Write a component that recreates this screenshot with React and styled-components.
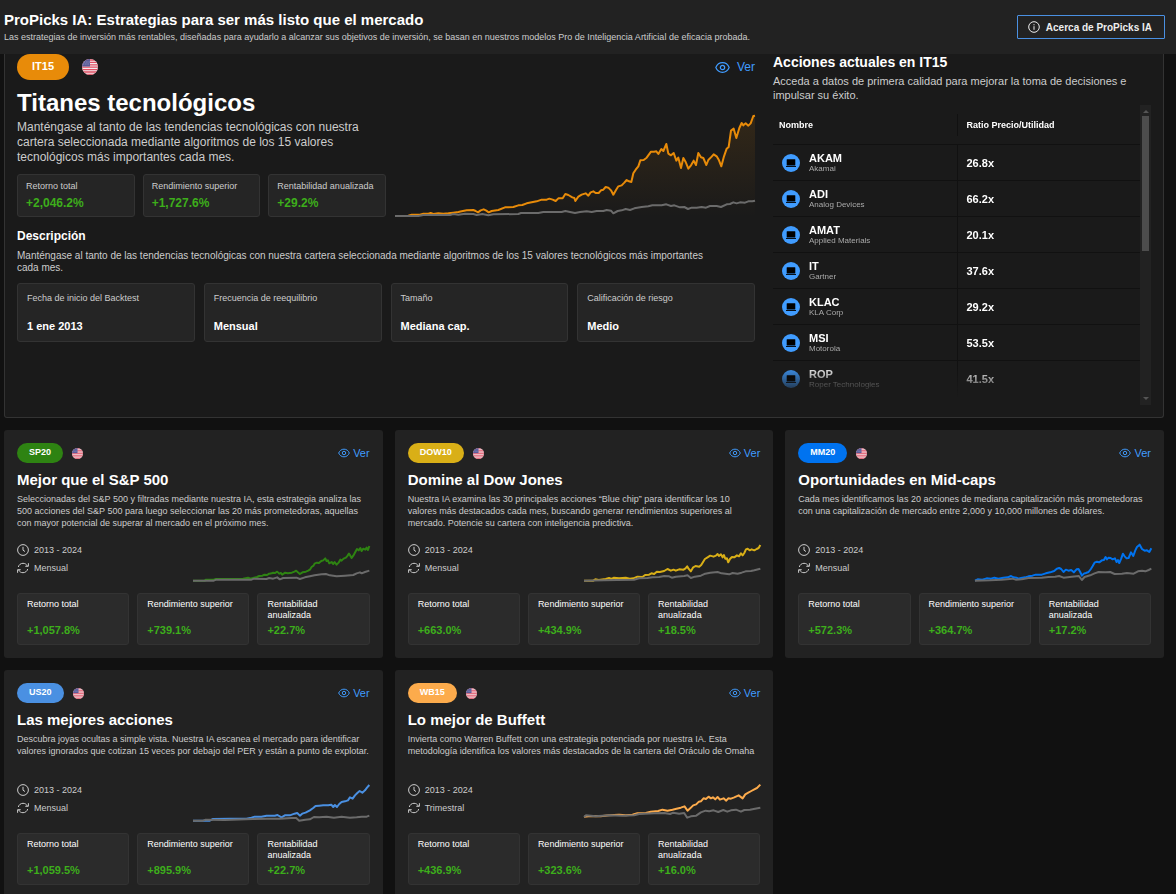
import React from "react";
import styled, { createGlobalStyle } from "styled-components";

const GlobalStyle = createGlobalStyle`
  * {
    box-sizing: border-box;
  }
  body {
    margin: 0;
    background: #111111;
    color: #ffffff;
    font-family: "Liberation Sans", Arial, sans-serif;
    font-size: 9px;
  }
  h1, h2, h3, p, dl, dt, dd {
    margin: 0;
  }
`;

const heroStats = [
  { label: "Retorno total", value: "+2,046.2%" },
  { label: "Rendimiento superior", value: "+1,727.6%" },
  { label: "Rentabilidad anualizada", value: "+29.2%" },
];

const heroFacts = [
  { label: "Fecha de inicio del Backtest", value: "1 ene 2013" },
  { label: "Frecuencia de reequilibrio", value: "Mensual" },
  { label: "Tamaño", value: "Mediana cap." },
  { label: "Calificación de riesgo", value: "Medio" },
];

const stocks = [
  { ticker: "AKAM", name: "Akamai", ratio: "26.8x" },
  { ticker: "ADI", name: "Analog Devices", ratio: "66.2x" },
  { ticker: "AMAT", name: "Applied Materials", ratio: "20.1x" },
  { ticker: "IT", name: "Gartner", ratio: "37.6x" },
  { ticker: "KLAC", name: "KLA Corp", ratio: "29.2x" },
  { ticker: "MSI", name: "Motorola", ratio: "53.5x" },
  { ticker: "ROP", name: "Roper Technologies", ratio: "41.5x" },
];

const heroLine =
  "0,306 40,305 50,302 75,302 85,299 100,299 107,297 115,300 130,298 145,299 160,298 175,296 190,294 200,292 215,289 235,288 242,291 249,295 257,289 266,286 274,290 281,295 290,291 310,288 330,280 355,279 370,274 382,273 395,268 425,262 440,257 455,257 463,254 473,257 482,261 490,253 503,253 511,240 520,243 532,250 538,252 541,261 550,248 560,242 572,238 580,245 587,235 595,232 602,237 611,237 618,229 625,227 632,219 640,221 648,229 655,242 663,228 670,217 680,214 688,206 695,198 702,202 709,204 715,178 722,167 730,157 736,139 746,138 755,131 768,113 777,113 784,112 790,120 799,105 805,111 814,90 820,119 828,124 836,117 844,140 850,131 858,162 865,132 872,144 880,164 888,154 896,140 903,153 910,117 918,130 925,132 934,153 940,138 950,128 956,121 965,127 972,139 979,157 987,127 995,104 1001,99 1008,50 1016,44 1024,72 1033,42 1040,27 1045,34 1052,28 1060,35 1067,28 1075,6 1080,5";
const heroBenchmark =
  "0,306 70,306 85,303 165,303 175,300 190,302 210,299 235,300 245,303 262,300 280,304 295,301 370,300 378,297 430,297 445,294 500,294 511,291 525,294 540,297 555,294 575,292 590,294 605,291 625,291 635,288 648,290 655,298 668,291 680,289 692,285 705,288 718,283 740,279 760,277 772,274 800,274 814,271 828,276 838,274 855,280 868,279 879,285 890,281 905,281 920,279 933,281 945,276 965,276 978,279 995,271 1005,270 1015,265 1025,268 1035,265 1050,266 1060,262 1072,262 1080,260";

const strategies = [
  {
    code: "SP20",
    color: "#2e8312",
    title: "Mejor que el S&P 500",
    text: "Seleccionadas del S&P 500 y filtradas mediante nuestra IA, esta estrategia analiza las 500 acciones del S&P 500 para luego seleccionar las 20 más prometedoras, aquellas con mayor potencial de superar al mercado en el próximo mes.",
    period: "Mensual",
    values: ["+1,057.8%", "+739.1%", "+22.7%"],
    line: "0,113 36,113 38,110 62,110 68,108 100,108 150,107 165,104 172,107 183,104 192,102 198,99 208,98 214,95 222,96 228,92 236,91 240,89 246,90 252,86 258,92 263,90 267,95 276,89 284,91 296,89 304,86 309,83 314,88 320,93 328,88 338,86 345,83 350,80 355,72 361,68 364,62 371,59 377,60 384,54 390,52 396,46 400,54 404,52 408,61 415,57 420,63 424,57 430,65 436,59 441,50 445,53 451,47 458,44 463,38 467,32 471,38 475,45 480,38 486,27 491,18 496,22 501,15 505,24 510,17 516,20 520,14 524,21 528,9",
    bench: "0,113 38,113 62,113 70,110 175,110 183,107 220,108 228,105 240,107 252,103 260,109 270,105 310,104 320,108 335,103 350,100 364,97 385,94 398,93 410,97 430,100 455,98 480,96 490,91 500,88 505,91 515,87 528,83",
  },
  {
    code: "DOW10",
    color: "#d9af17",
    title: "Domine al Dow Jones",
    text: "Nuestra IA examina las 30 principales acciones “Blue chip” para identificar los 10 valores más destacados cada mes, buscando generar rendimientos superiores al mercado. Potencie su cartera con inteligencia predictiva.",
    period: "Mensual",
    values: ["+663.0%", "+434.9%", "+18.5%"],
    line: "0,113 28,113 34,109 44,111 65,108 75,105 82,108 90,104 105,106 125,104 137,107 148,106 160,101 175,102 183,96 195,95 202,91 210,93 218,86 227,87 240,84 250,78 260,83 268,80 275,83 285,79 298,80 304,76 309,70 313,77 320,85 327,73 334,69 345,71 351,66 357,56 362,48 370,43 378,38 388,41 395,38 400,33 404,39 410,34 415,43 419,36 423,47 428,46 432,58 437,48 443,42 450,43 458,37 464,40 470,31 475,37 480,30 485,19 490,17 496,22 502,19 510,22 517,18 523,15 528,6",
    bench: "0,113 60,112 100,111 150,110 165,106 190,105 205,103 225,102 240,99 255,100 263,104 275,101 300,99 310,97 320,105 332,101 350,98 363,92 378,89 400,87 412,91 435,94 445,90 460,92 472,89 484,85 500,84 510,82 528,77",
  },
  {
    code: "MM20",
    color: "#0073f0",
    title: "Oportunidades en Mid-caps",
    text: "Cada mes identificamos las 20 acciones de mediana capitalización más prometedoras con una capitalización de mercado entre 2,000 y 10,000 millones de dólares.",
    period: "Mensual",
    values: ["+572.3%", "+364.7%", "+17.2%"],
    line: "0,113 8,109 22,110 35,106 48,107 58,104 70,107 85,104 98,103 108,99 115,103 124,104 130,107 138,105 150,103 160,100 172,98 182,95 200,95 212,91 225,88 237,84 245,77 252,75 258,78 265,87 272,80 280,83 288,81 296,88 304,79 310,78 315,87 320,98 326,92 332,90 340,87 347,78 352,70 358,59 365,56 372,58 380,52 386,51 391,42 395,49 400,44 406,45 412,49 419,46 424,57 428,51 432,60 438,46 443,32 448,40 454,46 460,45 467,28 474,39 480,22 485,12 493,5 500,18 508,23 515,22 522,27 528,16",
    bench: "0,113 45,112 80,110 112,107 122,110 140,109 160,105 200,104 220,102 240,101 252,99 265,104 290,101 311,99 320,111 328,102 345,97 358,91 370,87 390,88 405,87 418,93 440,92 455,90 475,92 488,85 500,83 510,85 520,81 528,77",
  },
  {
    code: "US20",
    color: "#4a90e2",
    title: "Las mejores acciones",
    text: "Descubra joyas ocultas a simple vista. Nuestra IA escanea el mercado para identificar valores ignorados que cotizan 15 veces por debajo del PER y están a punto de explotar.",
    period: "Mensual",
    values: ["+1,059.5%", "+895.9%", "+22.7%"],
    line: "0,113 50,113 60,108 110,107 160,107 175,104 185,101 205,101 220,98 245,98 253,96 265,103 275,97 290,97 304,92 312,90 320,98 327,92 337,89 350,82 360,75 367,69 378,68 390,67 405,67 414,65 420,72 425,66 431,72 438,63 445,57 455,55 464,52 470,43 478,47 485,37 492,30 499,24 507,29 515,22 521,14 528,6",
    bench: "0,113 30,113 38,110 95,111 180,108 220,107 260,107 295,105 309,105 318,113 336,110 350,109 362,102 378,103 400,101 422,104 445,101 470,104 490,103 505,101 520,101 528,98",
  },
  {
    code: "WB15",
    color: "#fcab4c",
    title: "Lo mejor de Buffett",
    text: "Invierta como Warren Buffett con una estrategia potenciada por nuestra IA. Esta metodología identifica los valores más destacados de la cartera del Oráculo de Omaha",
    period: "Trimestral",
    values: ["+436.9%", "+323.6%", "+16.0%"],
    line: "0,101 20,99 50,100 75,97 105,95 125,97 145,95 160,91 185,90 200,86 222,84 235,80 250,83 265,80 277,77 290,74 301,70 310,83 318,76 327,67 336,64 344,56 350,55 358,46 365,48 373,41 380,46 386,43 393,49 400,42 407,50 418,46 426,53 432,46 440,47 450,43 463,37 475,46 483,34 492,29 501,24 510,19 518,15 528,5",
    bench: "0,102 6,97 35,100 75,97 115,98 150,97 165,93 210,91 240,90 258,93 267,89 285,92 300,90 309,104 320,100 336,98 350,88 364,83 375,85 388,82 402,87 417,81 429,86 440,82 455,80 470,86 480,81 497,80 512,77 528,74",
  },
];

function EyeIcon({ size }) {
  return (
    <svg width={size} height={size} viewBox="0 0 16 16" fill="none" stroke="currentColor" strokeWidth="1.3" aria-hidden="true">
      <path d="M.9 8C2.200 4.800 4.800 2.900 8 2.900s5.800 1.900 7.100 5.100c-1.300 3.200-3.900 5.100-7.100 5.100S2.200 11.200.9 8Z" />
      <circle cx="8" cy="8" r="2.300" />
    </svg>
  );
}

function InfoIcon() {
  return (
    <svg width="12" height="12" viewBox="0 0 12 12" fill="none" stroke="currentColor" aria-hidden="true">
      <circle cx="6" cy="6" r="5.300" />
      <path d="M6 5.200v3.600M6 3.200v1.100" />
    </svg>
  );
}

function ClockIcon() {
  return (
    <svg width="12" height="12" viewBox="0 0 12 12" fill="none" stroke="currentColor" aria-hidden="true">
      <circle cx="6" cy="6" r="5.400" />
      <path d="M6 2.800v3.400l2 1.300" />
    </svg>
  );
}

function RefreshIcon() {
  return (
    <svg width="12" height="12" viewBox="0 0 12 12" fill="none" stroke="currentColor" aria-hidden="true">
      <path d="M1.300 5C1.900 2.700 3.800 1.300 6 1.300c1.900 0 3.500.9 4.300 2.700" />
      <path d="M11.400 1.200v3.100H8.300" />
      <path d="M10.700 7c-.6 2.300-2.500 3.700-4.700 3.700-1.900 0-3.500-.9-4.300-2.700" />
      <path d="M.6 10.800V7.700h3.100" />
    </svg>
  );
}

function LaptopIcon() {
  return (
    <svg width="18" height="18" viewBox="0 0 18 18" aria-hidden="true">
      <circle cx="9" cy="9" r="9" fill="#409cff" />
      <rect x="4.700" y="5.300" width="8.600" height="6.200" rx=".5" fill="#000000" />
      <path d="M4 12h10v.9H4z" fill="#000000" />
    </svg>
  );
}

function Flag({ size }) {
  return (
    <FlagSvg width={size} height={size} viewBox="0 0 16 16" role="img" aria-label="Estados Unidos">
      <rect width="16" height="16" fill="#f4e9ec" />
      <path
        d="M0 1h16M0 3.400h16M0 5.800h16M0 8.200h16M0 10.600h16M0 13h16M0 15.400h16"
        stroke="#e04f63"
        strokeWidth="1.300"
      />
      <rect width="8" height="7.500" fill="#5a5b98" />
      <path d="M2 3h6M1 5h6" stroke="#b9b9da" strokeWidth=".7" strokeDasharray=".8 1" />
    </FlagSvg>
  );
}

function LineChart({ width, height, line, bench, color, fill }) {
  return (
    <ChartSvg viewBox={`0 0 ${width} ${height}`} preserveAspectRatio="none" aria-hidden="true">
      {fill && (
        <>
          <defs>
            <linearGradient id="area" x1="0" y1="0" x2="0" y2="1">
              <stop offset="0" stopColor={color} stopOpacity="0.12" />
              <stop offset="1" stopColor={color} stopOpacity="0" />
            </linearGradient>
          </defs>
          <polygon points={`${line} ${width},${height} 0,${height}`} fill="url(#area)" />
        </>
      )}
      <polyline points={line} stroke={color} />
      <polyline points={bench} stroke="#6b6b6b" />
    </ChartSvg>
  );
}

function StrategyCard({ strategy }) {
  const labels = ["Retorno total", "Rendimiento superior", "Rentabilidad anualizada"];
  return (
    <Card>
      <TopRow>
        <Pill $color={strategy.color}>{strategy.code}</Pill>
        <Flag size={11} />
        <ViewLink href="#">
          <EyeIcon size={12} />
          Ver
        </ViewLink>
      </TopRow>
      <CardTitle>{strategy.title}</CardTitle>
      <CardText>{strategy.text}</CardText>
      <CardMiddle>
        <Meta>
          <MetaItem>
            <ClockIcon />
            2013 - 2024
          </MetaItem>
          <MetaItem>
            <RefreshIcon />
            {strategy.period}
          </MetaItem>
        </Meta>
        <CardChart>
          <LineChart width={528} height={117} line={strategy.line} bench={strategy.bench} color={strategy.color} />
        </CardChart>
      </CardMiddle>
      <CardStats>
        {labels.map((label, i) => (
          <CardStat key={label}>
            <dt>{label}</dt>
            <dd>{strategy.values[i]}</dd>
          </CardStat>
        ))}
      </CardStats>
    </Card>
  );
}

function App() {
  return (
    <>
      <GlobalStyle />
      <Header>
        <div>
          <PageTitle>ProPicks IA: Estrategias para ser más listo que el mercado</PageTitle>
          <PageSubtitle>
            Las estrategias de inversión más rentables, diseñadas para ayudarlo a alcanzar sus objetivos de inversión, se
            basan en nuestros modelos Pro de Inteligencia Artificial de eficacia probada.
          </PageSubtitle>
        </div>
        <AboutButton type="button">
          <InfoIcon />
          Acerca de ProPicks IA
        </AboutButton>
      </Header>
      <Main>
        <Hero>
          <div>
            <TopRow $large>
              <Pill $color="#e88b09" $large>
                IT15
              </Pill>
              <Flag size={16} />
              <ViewLink href="#" $large>
                <EyeIcon size={15} />
                Ver
              </ViewLink>
            </TopRow>
            <HeroBody>
              <HeroInfo>
                <HeroTitle>Titanes tecnológicos</HeroTitle>
                <HeroText>
                  Manténgase al tanto de las tendencias tecnológicas con nuestra cartera seleccionada mediante algoritmos
                  de los 15 valores tecnológicos más importantes cada mes.
                </HeroText>
                <HeroStats>
                  {heroStats.map((stat) => (
                    <HeroStat key={stat.label}>
                      <dt>{stat.label}</dt>
                      <dd>{stat.value}</dd>
                    </HeroStat>
                  ))}
                </HeroStats>
              </HeroInfo>
              <HeroChart>
                <LineChart width={1080} height={309} line={heroLine} bench={heroBenchmark} color="#e88b09" fill />
              </HeroChart>
            </HeroBody>
            <DescTitle>Descripción</DescTitle>
            <DescText>
              Manténgase al tanto de las tendencias tecnológicas con nuestra cartera seleccionada mediante algoritmos de
              los 15 valores tecnológicos más importantes cada mes.
            </DescText>
            <Facts>
              {heroFacts.map((fact) => (
                <Fact key={fact.label}>
                  <dt>{fact.label}</dt>
                  <dd>{fact.value}</dd>
                </Fact>
              ))}
            </Facts>
          </div>
          <div>
            <StocksTitle>Acciones actuales en IT15</StocksTitle>
            <StocksText>
              Acceda a datos de primera calidad para mejorar la toma de decisiones e impulsar su éxito.
            </StocksText>
            <StocksBox>
              <StocksTable>
                <thead>
                  <tr>
                    <th scope="col">
                      <span>Nombre</span>
                    </th>
                    <th scope="col">
                      <span>Ratio Precio/Utilidad</span>
                    </th>
                  </tr>
                </thead>
                <tbody>
                  {stocks.map((stock) => (
                    <tr key={stock.ticker}>
                      <td>
                        <Stock>
                          <LaptopIcon />
                          <div>
                            <Ticker>{stock.ticker}</Ticker>
                            <Company>{stock.name}</Company>
                          </div>
                        </Stock>
                      </td>
                      <td>{stock.ratio}</td>
                    </tr>
                  ))}
                </tbody>
              </StocksTable>
              <ScrollTrack aria-hidden="true">
                <ScrollArrow />
                <ScrollThumb />
                <ScrollArrow $down />
              </ScrollTrack>
            </StocksBox>
          </div>
        </Hero>
        <Cards>
          {strategies.map((strategy) => (
            <StrategyCard key={strategy.code} strategy={strategy} />
          ))}
        </Cards>
      </Main>
    </>
  );
}

export default App;

const Header = styled.header`
  display: flex;
  align-items: center;
  justify-content: space-between;
  min-height: 54px;
  padding: 0 11px 0 4px;
  background: #222222;
`;

const PageTitle = styled.h1`
  font-size: 15px;
  line-height: 20px;
`;

const PageSubtitle = styled.p`
  font-size: 9px;
  line-height: 14px;
  color: #cccccc;
`;

const AboutButton = styled.button`
  display: flex;
  align-items: center;
  gap: 6px;
  height: 24px;
  padding: 0 12px 0 10px;
  border: 1px solid #4a90e2;
  border-radius: 1px;
  background: transparent;
  color: #eeeeee;
  font-family: inherit;
  font-size: 10px;
  font-weight: bold;
  white-space: nowrap;
  cursor: pointer;
`;

const Main = styled.main`
  padding: 0 12px 12px 4px;
`;

const Hero = styled.section`
  display: grid;
  grid-template-columns: minmax(0, 41fr) minmax(0, 21fr);
  gap: 18px;
  padding: 0 12px 12px;
  border: 1px solid #333333;
  border-top: none;
  border-radius: 0 0 3px 3px;
  background: #1a1a1a;
`;

const TopRow = styled.div`
  display: flex;
  align-items: center;
  gap: ${(props) => (props.$large ? "13px" : "9px")};
`;

const Pill = styled.span`
  height: ${(props) => (props.$large ? "26px" : "20px")};
  padding: 0 ${(props) => (props.$large ? "15px" : "12px")};
  border-radius: 13px;
  background: ${(props) => props.$color};
  font-size: ${(props) => (props.$large ? "11px" : "9px")};
  font-weight: bold;
  line-height: ${(props) => (props.$large ? "25px" : "19px")};
`;

const ViewLink = styled.a`
  display: flex;
  align-items: center;
  gap: ${(props) => (props.$large ? "7px" : "3px")};
  margin-left: auto;
  color: #409cff;
  font-size: ${(props) => (props.$large ? "12px" : "11px")};
  text-decoration: none;
`;

const FlagSvg = styled.svg`
  border-radius: 50%;
`;

const HeroBody = styled.div`
  display: flex;
  align-items: flex-end;
  gap: 9px;
  margin-top: 7px;
`;

const HeroInfo = styled.div`
  flex: 0 1 369px;
`;

const HeroTitle = styled.h2`
  font-size: 24px;
  line-height: 31px;
`;

const HeroText = styled.p`
  max-width: 360px;
  margin-top: 2px;
  color: #cccccc;
  font-size: 12px;
  line-height: 15px;
`;

const HeroStats = styled.dl`
  display: grid;
  grid-template-columns: repeat(3, minmax(0, 1fr));
  gap: 8px;
  margin-top: 9px;
`;

const StatBox = styled.div`
  border: 1px solid #333333;
  border-radius: 3px;
  background: #252525;

  dt {
    color: #cccccc;
    font-size: 9px;
  }
  dd {
    font-weight: bold;
  }
`;

const HeroStat = styled(StatBox)`
  padding: 4px 8px;

  dt {
    line-height: 15px;
    white-space: nowrap;
  }
  dd {
    color: #3dae1b;
    font-size: 12px;
    line-height: 18px;
  }
`;

const ChartSvg = styled.svg`
  display: block;
  width: 100%;
  height: 100%;
  overflow: visible;

  polyline {
    fill: none;
    stroke-width: 2px;
    stroke-linejoin: round;
    vector-effect: non-scaling-stroke;
  }
`;

const HeroChart = styled.div`
  flex: 1;
  min-width: 0;
  height: 103px;
`;

const DescTitle = styled.h3`
  margin-top: 11px;
  font-size: 12px;
  line-height: 16px;
`;

const DescText = styled.p`
  margin-top: 6px;
  padding-right: 40px;
  color: #cccccc;
  font-size: 10px;
  line-height: 12px;
`;

const Facts = styled.dl`
  display: grid;
  grid-template-columns: repeat(4, minmax(0, 1fr));
  gap: 9px;
  margin-top: 9px;
`;

const Fact = styled(StatBox)`
  padding: 7px 9px 8px;

  dt {
    line-height: 14px;
  }
  dd {
    margin-top: 14px;
    font-size: 11px;
    line-height: 14px;
  }
`;

const StocksTitle = styled.h3`
  font-size: 14px;
  line-height: 16px;
`;

const StocksText = styled.p`
  margin-top: 4px;
  color: #cccccc;
  font-size: 11px;
  line-height: 14px;
`;

const StocksBox = styled.div`
  display: flex;
  align-items: flex-start;
  margin-top: 3px;
`;

const StocksTable = styled.table`
  flex: 1;
  border-collapse: separate;
  border-spacing: 0;
  mask-image: linear-gradient(#000000 260px, transparent 292px);

  th {
    width: 50%;
    height: 40px;
    padding: 0;
    border-bottom: 1px solid #111111;
    font-size: 9px;
    text-align: left;
  }
  th span {
    display: block;
    padding: 6px;
  }
  th + th span {
    padding-left: 9px;
    border-left: 1px solid #111111;
  }
  td {
    height: 36px;
    padding: 0 9px;
    border-bottom: 1px solid #111111;
    font-size: 11px;
    font-weight: bold;
  }
  td + td {
    border-left: 1px solid #111111;
  }
  tr:last-child td {
    border-bottom: none;
  }
`;

const Stock = styled.div`
  display: flex;
  align-items: center;
  gap: 9px;
`;

const Ticker = styled.div`
  font-size: 11px;
  line-height: 12px;
`;

const Company = styled.div`
  color: #aaaaaa;
  font-size: 8px;
  font-weight: normal;
  line-height: 10px;
`;

const ScrollTrack = styled.div`
  display: flex;
  flex-direction: column;
  align-items: center;
  width: 11px;
  height: 300px;
  background: #222222;
`;

const ScrollArrow = styled.span`
  margin: 5px 0 3px;
  border: 3px solid transparent;
  border-top-width: 0;
  border-bottom-color: #555555;
  ${(props) => props.$down && "margin: auto 0 5px; transform: rotate(180deg);"}
`;

const ScrollThumb = styled.span`
  width: 7px;
  height: 135px;
  background: #4d4d4d;
`;

const Cards = styled.section`
  display: grid;
  grid-template-columns: repeat(3, minmax(0, 1fr));
  gap: 12px;
  margin-top: 12px;
`;

const Card = styled.article`
  padding: 13px;
  border-radius: 3px;
  background: #222222;
`;

const CardTitle = styled.h2`
  margin-top: 7px;
  font-size: 15px;
  line-height: 20px;
`;

const CardText = styled.p`
  min-height: 36px;
  margin-top: 3px;
  color: #cccccc;
  font-size: 9px;
  line-height: 12px;
`;

const CardMiddle = styled.div`
  display: flex;
  align-items: flex-end;
  justify-content: space-between;
  margin-top: 12px;
`;

const Meta = styled.div`
  padding-bottom: 5px;
`;

const MetaItem = styled.div`
  display: flex;
  align-items: center;
  gap: 5px;
  height: 18px;
  color: #cccccc;
`;

const CardChart = styled.div`
  width: 50%;
  height: 39px;
`;

const CardStats = styled.dl`
  display: grid;
  grid-template-columns: repeat(3, minmax(0, 1fr));
  gap: 8px;
  margin-top: 11px;
`;

const CardStat = styled(StatBox)`
  padding: 5px 9px 6px;
  background: #2b2b2b;

  dt {
    height: 23px;
    color: #ffffff;
    line-height: 11px;
  }
  dd {
    color: #3dae1b;
    font-size: 11px;
    line-height: 16px;
  }
`;
